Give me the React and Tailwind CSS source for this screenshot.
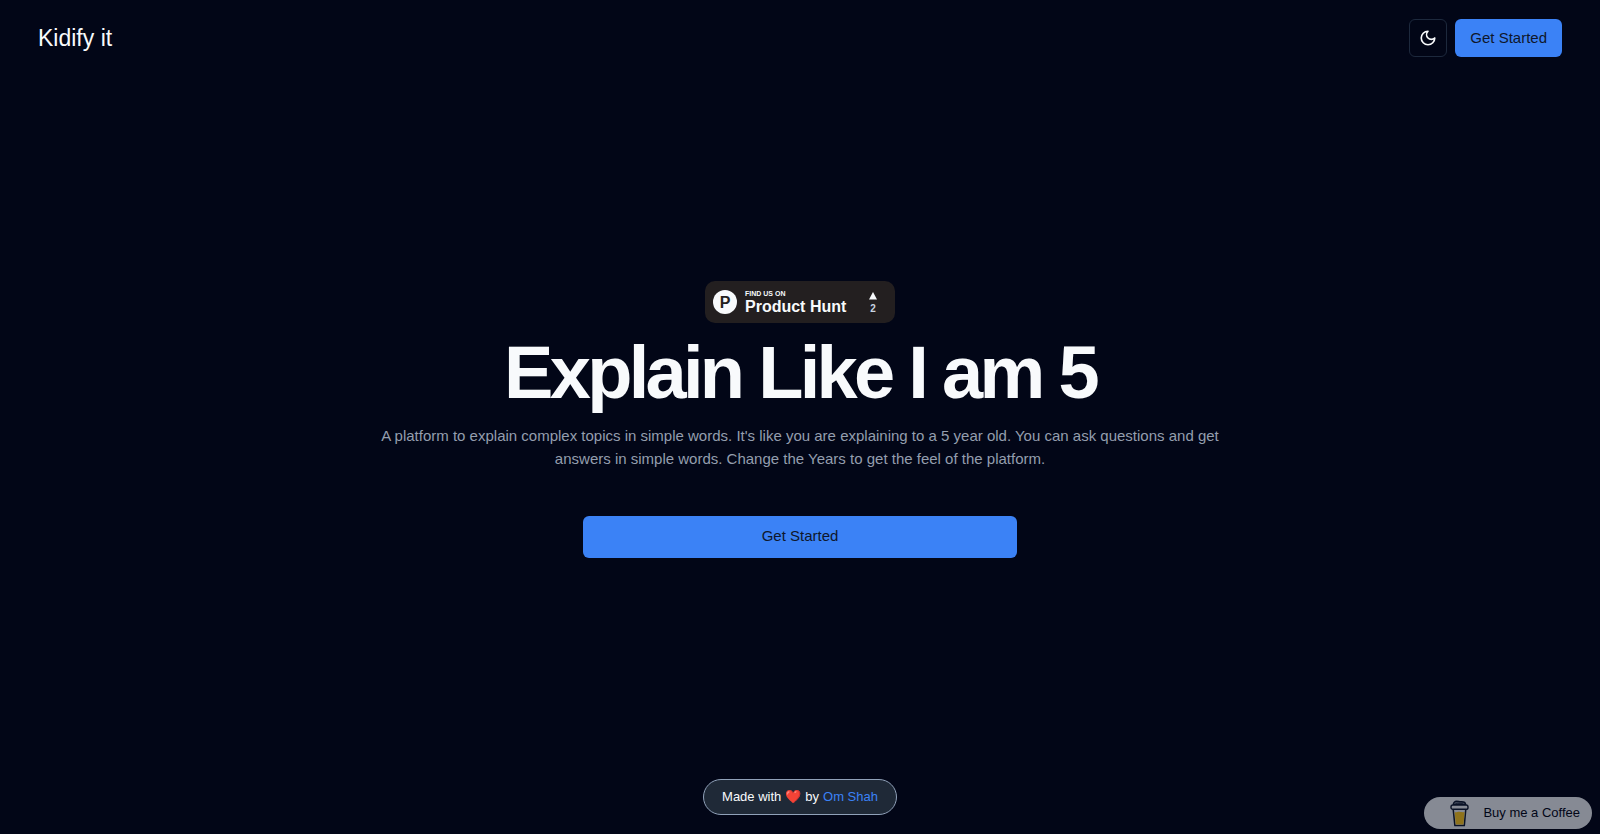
import React from "react";

function MoonIcon() {
  return (
    <svg
      className="size-[18px]"
      viewBox="0 0 24 24"
      fill="none"
      stroke="currentColor"
      strokeWidth="2.2"
      strokeLinecap="round"
      strokeLinejoin="round"
      aria-hidden="true"
    >
      <path d="M12 3a6 6 0 0 0 9 9 9 9 0 1 1-9-9Z" />
    </svg>
  );
}

function CoffeeCup() {
  return (
    <svg className="h-[27px] w-[19px]" viewBox="0 0 19 27" aria-hidden="true">
      <path d="M3.2 9.3h12.6l-1.5 16.3H4.9z" fill="#868a94" stroke="#0a1226" strokeWidth="1.5" strokeLinejoin="round" />
      <path d="M4.7 12.2c2 .6 3-.7 5-.4s2.6.6 4.9.2l-1.1 12.5H5.7z" fill="#8f731c" />
      <path d="M3.3 4.5C3.3 2.5 4.8 1.3 6.6 1.3c2 0 2.6.5 4.6.4 2.4-.1 4.3.7 4.5 2.8z" fill="#4b5364" stroke="#0a1226" strokeWidth="1.4" strokeLinejoin="round" />
      <path d="M6 3.3c2-.5 4 .4 6.5 0" fill="none" stroke="#0a1226" strokeWidth=".8" strokeLinecap="round" />
      <rect x="1" y="5" width="17" height="4.3" rx="1.9" fill="#868a94" stroke="#0a1226" strokeWidth="1.4" />
    </svg>
  );
}

function ProductHuntBadge() {
  return (
    <a
      href="#product-hunt"
      className="flex h-[42px] w-[190px] items-center rounded-[10px] bg-[#231f20] pr-[18px] pl-2 font-['Liberation_Sans',sans-serif] text-slate-50"
    >
      <span className="flex size-6 items-center justify-center rounded-full bg-slate-50 pt-0.5 text-[16px] leading-none font-bold text-[#231f20]">P</span>
      <span className="ml-2 flex flex-col pt-0.5">
        <span className="text-[7px] leading-[8px] font-bold">FIND US ON</span>
        <span className="text-[16px] leading-[17px] font-bold whitespace-nowrap">Product Hunt</span>
      </span>
      <span className="ml-auto flex flex-col items-center gap-1 pt-0.5">
        <svg className="h-2 w-2" viewBox="0 0 8 8" fill="currentColor" aria-hidden="true">
          <path d="M4 0 8 7.5H0z" />
        </svg>
        <span className="text-[10px] leading-[10px] font-bold text-slate-300">2</span>
      </span>
    </a>
  );
}

export default function App() {
  return (
    <div className="flex min-h-screen flex-col bg-[#020617] font-['Liberation_Sans',sans-serif] text-slate-50">
      <header className="flex items-center justify-between px-[38px] py-[19px]">
        <a href="#home" className="text-[23px] leading-8">Kidify it</a>
        <div className="flex items-center gap-2">
          <button type="button" aria-label="Toggle theme" className="flex size-[38px] items-center justify-center rounded-md border border-slate-800">
            <MoonIcon />
          </button>
          <button type="button" className="h-[38px] rounded-md bg-[#3b82f6] px-[15px] text-[15px] text-slate-900">Get Started</button>
        </div>
      </header>

      <main className="flex grow flex-col items-center justify-center pb-[17px]">
        <ProductHuntBadge />
        <h1 className="mt-3 text-center text-[74px] leading-[76px] font-bold tracking-tighter">Explain Like I am 5</h1>
        <p className="mt-[13px] max-w-[880px] text-center text-[15px] leading-[23px] text-[#949eae]">
          A platform to explain complex topics in simple words. It's like you are explaining to a 5 year old. You can ask questions and get answers in simple words. Change the Years to get the feel of the platform.
        </p>
        <button type="button" className="mt-[46px] h-[42px] w-[434px] max-w-full rounded-md bg-[#3b82f6] text-[15px] text-slate-900">Get Started</button>
      </main>

      <footer className="flex justify-center pb-[19px]">
        <p className="flex h-9 items-center gap-1 rounded-full border border-slate-400 bg-[#1f2937] px-[18px] text-[13px]">
          <span>Made with</span>
          <span>❤️</span>
          <span>by</span>
          <a href="#author" className="text-[#3b82f6]">Om Shah</a>
        </p>
      </footer>

      <a
        href="#coffee"
        className="fixed right-2 bottom-[5px] flex h-8 w-[168px] items-center justify-end gap-[14px] rounded-full bg-[#868a94] pr-3 text-[13px] text-[#020617]"
      >
        <CoffeeCup />
        <span>Buy me a Coffee</span>
      </a>
    </div>
  );
}
